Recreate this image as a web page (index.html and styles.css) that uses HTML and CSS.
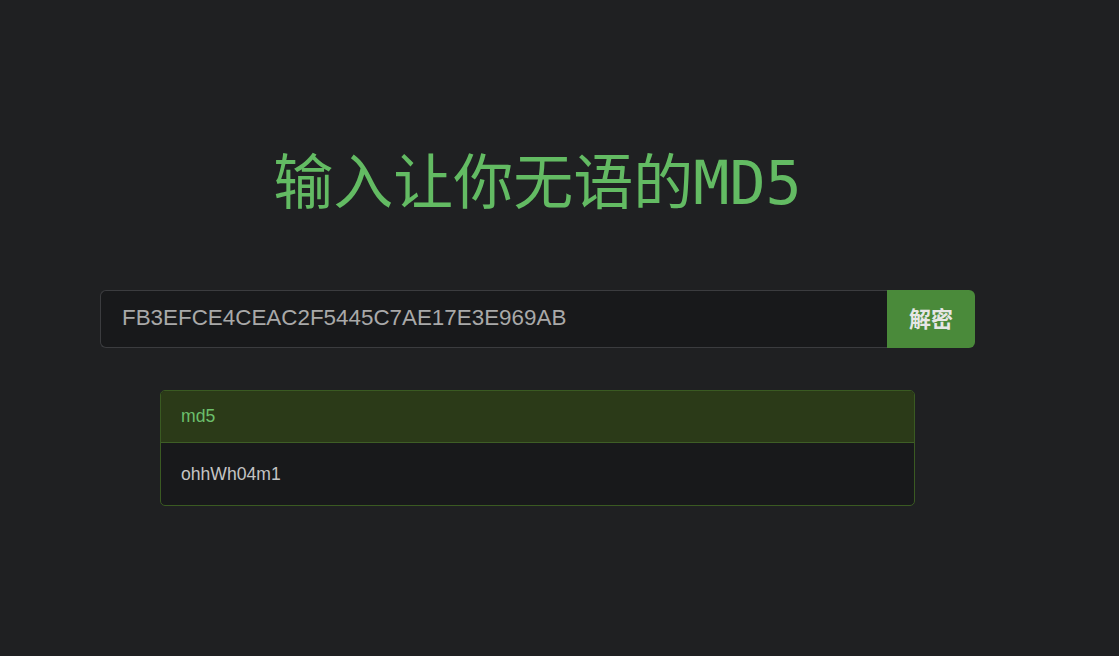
FILE: index.html
```html
<!DOCTYPE html>
<html lang="zh">
<head>
<meta charset="utf-8">
<title>MD5</title>
<link rel="stylesheet" href="styles.css">
</head>
<body>
<div class="container">
  <h1 class="title">输入让你无语的MD5</h1>
  <form class="search">
    <input class="search-input" type="text" value="FB3EFCE4CEAC2F5445C7AE17E3E969AB">
    <button class="search-btn" type="button">解密</button>
  </form>
  <div class="card">
    <div class="card-header">md5</div>
    <div class="card-body">ohhWh04m1</div>
  </div>
</div>
</body>
</html>
```
FILE: styles.css
```css
html, body {
  margin: 0;
  padding: 0;
  background: #1f2022;
  height: 100%;
}
.container {
  width: 875px;
  margin-left: 100px;
  padding-top: 138px;
  font-family: "Liberation Sans", Arial, sans-serif;
}
.title {
  margin: 0;
  text-align: center;
  font-family: "DejaVu Sans Mono", "Noto Sans CJK SC", monospace;
  font-weight: normal;
  font-size: 60px;
  line-height: 90px;
  color: #63bb63;
}
.search {
  display: flex;
  margin: 62px 0 0;
  height: 58px;
}
.search-input {
  flex: 1;
  box-sizing: border-box;
  height: 58px;
  margin: 0;
  padding: 0 21px 2px;
  background: #18191b;
  border: 1px solid #3b3c3f;
  border-right: none;
  border-radius: 6px 0 0 6px;
  color: #a9a9a9;
  font-family: "Liberation Sans", Arial, sans-serif;
  font-size: 22.4px;
  outline: none;
}
.search-btn {
  width: 88px;
  height: 58px;
  margin: 0;
  border: none;
  border-radius: 0 6px 6px 0;
  background: #4a8a3a;
  color: #e6e6e6;
  font-family: "Noto Sans CJK SC", sans-serif;
  font-weight: bold;
  font-size: 22px;
  padding: 0 0 5px;
}
.card {
  margin: 42px 60px 0;
  border: 1px solid #3a5a22;
  border-radius: 5px;
  background: #18191b;
  overflow: hidden;
}
.card-header {
  background: #2b3a18;
  border-bottom: 1px solid #3e5e26;
  height: 51px;
  line-height: 50px;
  padding: 0 20px;
  color: #6cbf6c;
  font-size: 17.6px;
}
.card-body {
  height: 62px;
  line-height: 62px;
  padding: 0 20px;
  color: #c4c4c4;
  font-size: 17.6px;
}
```
